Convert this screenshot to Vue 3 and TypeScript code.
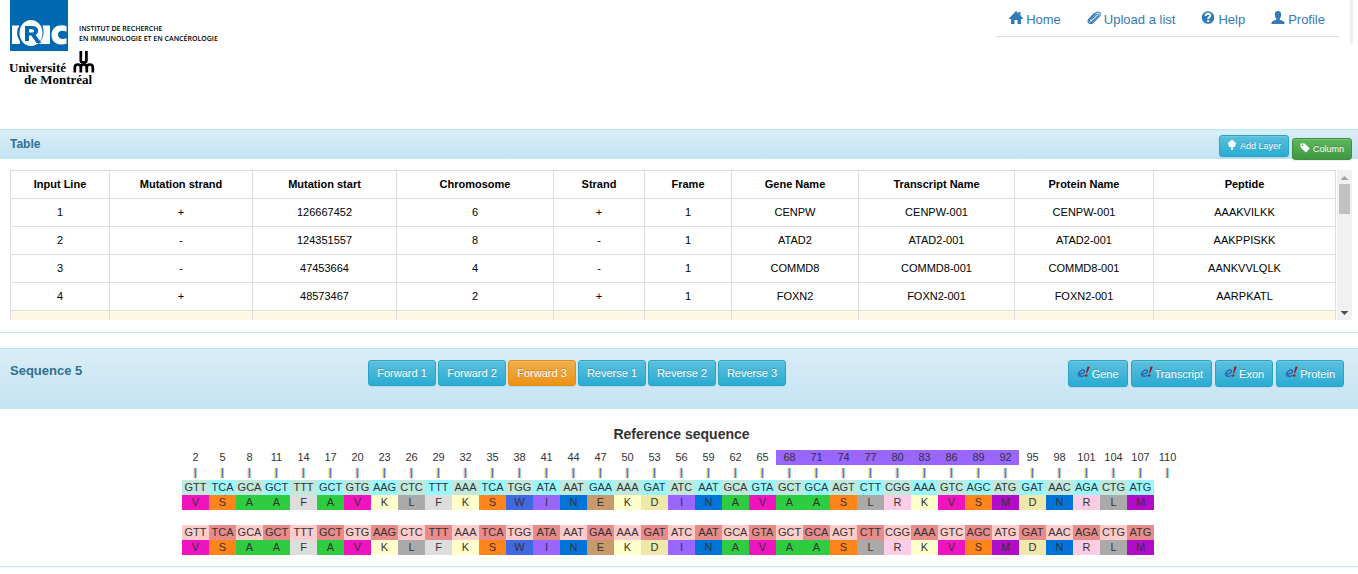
<script setup lang="ts">
interface Column {
  label: string
  weight: number
}

const columns: Column[] = [
  { label: 'Input Line', weight: 99 },
  { label: 'Mutation strand', weight: 143 },
  { label: 'Mutation start', weight: 144 },
  { label: 'Chromosome', weight: 157 },
  { label: 'Strand', weight: 91 },
  { label: 'Frame', weight: 87 },
  { label: 'Gene Name', weight: 127 },
  { label: 'Transcript Name', weight: 156 },
  { label: 'Protein Name', weight: 139 },
  { label: 'Peptide', weight: 182 },
]
const totalWeight = columns.reduce((sum, c) => sum + c.weight, 0)

const rows: string[][] = [
  ['1', '+', '126667452', '6', '+', '1', 'CENPW', 'CENPW-001', 'CENPW-001', 'AAAKVILKK'],
  ['2', '-', '124351557', '8', '-', '1', 'ATAD2', 'ATAD2-001', 'ATAD2-001', 'AAKPPISKK'],
  ['3', '-', '47453664', '4', '-', '1', 'COMMD8', 'COMMD8-001', 'COMMD8-001', 'AANKVVLQLK'],
  ['4', '+', '48573467', '2', '+', '1', 'FOXN2', 'FOXN2-001', 'FOXN2-001', 'AARPKATL'],
]

const frames = ['Forward 1', 'Forward 2', 'Forward 3', 'Reverse 1', 'Reverse 2', 'Reverse 3']
const activeFrame = 'Forward 3'
const links = ['Gene', 'Transcript', 'Exon', 'Protein']

const codons =
  'GTT TCA GCA GCT TTT GCT GTG AAG CTC TTT AAA TCA TGG ATA AAT GAA AAA GAT ATC AAT GCA GTA GCT GCA AGT CTT CGG AAA GTC AGC ATG GAT AAC AGA CTG ATG'.split(' ')
const acids = 'VSAAFAVKLFKSWINEKDINAVAASLRKVSMDNRLM'.split('')
const positions = Array.from({ length: codons.length + 1 }, (_, i) => 2 + 3 * i)
const inPeptide = (p: number) => p >= 68 && p <= 92
</script>

<template>
  <div class="page">
    <header class="top">
      <svg class="logo" width="220" height="90" viewBox="0 0 220 90" role="img" aria-label="IRIC, Université de Montréal">
        <rect x="10" y="0" width="58" height="51" fill="#0068b0" />
        <path d="M12 25.500h7.500q-2.500 3-2.500 7.500t3 8.500v2.500h-8z" fill="#fff" />
        <ellipse cx="31" cy="33" rx="11.500" ry="13" fill="#fff" />
        <path d="M42.500 25.500h7.500v18.500h-10l-1.500-1q4.500-4 5-9t-1-8.500z" fill="#fff" />
        <path d="M66.500 26v5.800c-4-2-8.500-1-8.500 3s4.500 5.200 8.500 3.200v5.700c-7 2.300-15-.3-15-8.800s8-11.300 15-8.900z" fill="#fff" />
        <path fill="#0068b0" fill-rule="evenodd" d="M25 26h7.500c6.500 0 7.500 7 3 9l6 8h-5l-5.200-7.500H29V41h-4zm4 3.200v3.300h3c2.800 0 2.800-3.300 0-3.300z" />
        <g class="institute">
          <text x="79" y="31">INSTITUT DE RECHERCHE</text>
          <text x="79" y="41">EN IMMUNOLOGIE ET EN CANCÉROLOGIE</text>
        </g>
        <g class="university">
          <text x="9" y="72">Université</text>
          <text x="24" y="84">de Montréal</text>
        </g>
        <g fill="none" stroke="#000" stroke-width="2.700">
          <path d="M80.800 51v9.500q0 2 2.800 2t2.800-2V51" />
          <path d="M74.800 72.500V67.500q0-3 3-3t3 3v5M80.800 67.500q0-3 3-3t3 3v5M86.800 67.500q0-3 3-3t3 3v5" />
        </g>
      </svg>
      <nav class="nav">
        <a href="#home"><svg width="14" height="14" viewBox="0 0 14 14"><path fill="currentColor" d="M7 0l2.500 2.500V1h2v3.500L14 7.200v.8h-2v5H8.500V9h-3v4H2V8H0v-.8z" /></svg>Home</a>
        <a href="#upload"><svg width="14" height="14" viewBox="0 0 14 14"><path fill="none" stroke="currentColor" stroke-width="1.100" d="M4.300 8.700l5.200-5.200c1.200-1.100 2.600.2 1.500 1.300L5.300 10.500c-1.900 1.700-4-.3-2.400-2.200L8.600 2.200c2.500-2.600 6.200-.3 4.200 2.700L6.500 11.200c-3.200 3.200-7.200.3-4.800-2.900L7.500 2.200" /></svg>Upload a list</a>
        <a href="#help"><svg width="14" height="14" viewBox="0 0 14 14"><circle cx="7" cy="6.500" r="6.300" fill="currentColor" /><path fill="none" stroke="#fff" stroke-width="1.900" d="M4.700 5c0-3 4.800-2.800 4.600-.2C9.200 6.300 7.200 6 7.200 8" /><path fill="#fff" d="M6.200 9h2v2h-2z" /></svg>Help</a>
        <a href="#profile"><svg width="14" height="14" viewBox="0 0 14 14"><path fill="currentColor" d="M7 0c2.200 0 3.200 1.400 3.200 3.500 0 1.800-.6 3-1.400 3.900v1.400c1.400.8 4.700 1.300 4.700 3.200v1H.5v-1c0-1.900 3.300-2.400 4.700-3.200V7.400C4.400 6.500 3.800 5.300 3.800 3.500 3.800 1.400 4.800 0 7 0z" /></svg>Profile</a>
      </nav>
      <div class="edge"></div>
    </header>

    <section class="panel">
      <div class="panel-heading">
        <h2>Table</h2>
        <div class="tools">
          <button type="button" class="btn btn-xs info"><svg width="10" height="11" viewBox="0 0 10 11"><path fill="currentColor" d="M5 0c1 0 1.700.6 1.900 1.500C8 1.700 9 2.500 9 3.700c0 .9-.3 1.300-.8 1.700 0 1.300-1.200 2-2.500 1.700L6 10H4l.3-2.900C3 7.400 1.800 6.700 1.800 5.400 1.300 5 1 4.600 1 3.700c0-1.200 1-2 2.100-2.200C3.300.6 4 0 5 0z" /></svg>Add Layer</button>
          <button type="button" class="btn btn-xs success"><svg width="10" height="11" viewBox="0 0 10 11"><path fill="currentColor" fill-rule="evenodd" d="M.5.500h4.200L9.700 5.600 6 9.500.5 4.500zm1.300 1.200v1.400h1.400V1.700z" /></svg>Column</button>
        </div>
      </div>
      <div class="table-area">
        <div class="table-clip">
          <table>
            <colgroup>
              <col v-for="c in columns" :key="c.label" :style="{ width: (c.weight / totalWeight) * 100 + '%' }" />
            </colgroup>
            <thead>
              <tr><th v-for="c in columns" :key="c.label" scope="col">{{ c.label }}</th></tr>
            </thead>
            <tbody>
              <tr v-for="row in rows" :key="row[0]"><td v-for="(cell, i) in row" :key="i">{{ cell }}</td></tr>
              <tr class="warning"><td v-for="c in columns" :key="c.label"></td></tr>
            </tbody>
          </table>
        </div>
        <div class="scrollbar" aria-hidden="true">
          <svg width="15" height="14" viewBox="0 0 15 14"><path fill="#a3a3a3" d="M7.500 6L11.500 10h-8z" /></svg>
          <div class="thumb"></div>
          <svg width="15" height="14" viewBox="0 0 15 14"><path fill="#505050" d="M3.500 5h8l-4 4z" /></svg>
        </div>
      </div>
    </section>

    <section class="panel sequence">
      <div class="panel-heading">
        <h2>Sequence 5</h2>
        <div class="frames">
          <button v-for="f in frames" :key="f" type="button" class="btn btn-sm" :class="f === activeFrame ? 'warn' : 'info'">{{ f }}</button>
        </div>
        <div class="links">
          <button v-for="l in links" :key="l" type="button" class="btn btn-sm info"><svg width="13" height="12" viewBox="0 0 13 12"><path fill="none" stroke="#2f62b0" stroke-width="1.400" d="M1.500 7.800C4 8.500 8 6.800 7.500 4.800S2 4.500 1.500 7.800s4.500 3 7 1.200" /><path fill="#a3141c" d="M10.500.5l2.300.3-2.800 6.700-1-.2zM8.700 8.500l2 .3-.7 2-2-.3z" /></svg>{{ l }}</button>
        </div>
      </div>
      <div class="viewer">
        <h3>Reference sequence</h3>
        <div class="grid">
          <span v-for="p in positions" :key="p" :class="{ marked: inPeptide(p) }">{{ p }}</span>
          <span v-for="p in positions" :key="'t' + p" class="tick">|</span>
        </div>
        <div class="grid ref">
          <span v-for="(c, i) in codons" :key="i" class="codon">{{ c }}</span>
          <i></i>
          <span v-for="(a, i) in acids" :key="'a' + i" :class="'aa-' + a">{{ a }}</span>
        </div>
        <div class="grid alt">
          <span v-for="(c, i) in codons" :key="i" class="codon">{{ c }}</span>
          <i></i>
          <span v-for="(a, i) in acids" :key="'a' + i" :class="'aa-' + a">{{ a }}</span>
        </div>
      </div>
    </section>
  </div>
</template>

<style>
body {
  margin: 0;
  background: #fff;
}
</style>

<style scoped>
.page {
  font-family: "Liberation Sans", Arial, sans-serif;
  font-size: 11px;
  color: #333;
  overflow: hidden;
}
.page * {
  box-sizing: border-box;
}
.top {
  display: flex;
  align-items: flex-start;
  height: 129px;
}
.logo {
  flex: none;
  margin-right: auto;
}
.institute {
  font: 600 7px "Open Sans", sans-serif;
}
.university {
  font: bold 13px "Liberation Serif", serif;
}
.nav {
  display: flex;
  gap: 26px;
  height: 37px;
  padding: 11px 14px 0 13px;
  border-bottom: 1px solid #ddd;
}
.nav a {
  display: flex;
  align-items: flex-start;
  gap: 3px;
  font-size: 13px;
  line-height: 17px;
  color: #337ab7;
  text-decoration: none;
}
.edge {
  width: 3px;
  height: 44px;
  margin: 0 5px 0 11px;
  background: #eee;
}
.panel {
  border-bottom: 1px solid #bce8f1;
  margin-bottom: 15px;
}
.panel-heading {
  display: flex;
  align-items: flex-start;
  justify-content: space-between;
  height: 30px;
  padding: 5px 6px 0 10px;
  border-top: 1px solid #bce8f1;
  border-bottom: 1px solid #bce8f1;
  background: linear-gradient(#d9edf7, #c4e3f3);
}
h2 {
  margin: 0;
  padding-top: 1px;
  font-size: 12px;
  line-height: 16px;
  color: #31708f;
}
.tools {
  display: flex;
  gap: 3px;
}
.tools .success {
  margin-top: 3px;
}
.btn {
  display: inline-flex;
  align-items: center;
  justify-content: center;
  font-family: inherit;
  white-space: nowrap;
  color: #fff;
  border: 1px solid;
  border-radius: 3px;
  text-shadow: 0 -1px 0 rgba(0, 0, 0, 0.2);
  box-shadow: inset 0 1px 0 rgba(255, 255, 255, 0.15), 0 1px 1px rgba(0, 0, 0, 0.075);
}
.btn svg {
  flex: none;
}
.btn-xs {
  gap: 3px;
  height: 22px;
  padding: 0 7px;
  font-size: 9px;
}
.btn-xs svg {
  margin-bottom: 2px;
}
.btn-sm {
  height: 26px;
  padding: 0 8px;
  font-size: 11px;
}
.info {
  background: linear-gradient(#5bc0de, #2aabd2);
  border-color: #28a4c9;
}
.success {
  background: linear-gradient(#5cb85c, #419641);
  border-color: #3e8f3e;
}
.warn {
  background: linear-gradient(#f0ad4e, #eb9316);
  border-color: #e38d13;
}
.table-area {
  display: flex;
  gap: 1px;
  height: 173px;
  padding: 11px 6px 12px 10px;
}
.table-clip {
  flex: 1;
  overflow: hidden;
}
table {
  width: 100%;
  table-layout: fixed;
  border-collapse: collapse;
  color: #000;
}
th,
td {
  height: 28px;
  padding: 0 0 2px;
  border: 1px solid #ddd;
  text-align: center;
}
.warning td {
  background: #fcf8e3;
}
.scrollbar {
  display: flex;
  flex-direction: column;
  width: 15px;
  background: #f1f1f1;
}
.thumb {
  height: 30px;
  margin: 0 2px auto;
  background: #c1c1c1;
}
.sequence .panel-heading {
  display: grid;
  grid-template-columns: 358px 1fr auto;
  height: 61px;
  padding-top: 11px;
  padding-right: 14px;
}
.sequence h2 {
  padding-top: 3px;
  font-size: 13px;
}
.frames {
  display: flex;
  gap: 2px;
}
.frames .btn {
  width: 68px;
  padding: 0;
}
.links {
  display: flex;
  gap: 3px;
}
.links .btn {
  gap: 2px;
  height: 27px;
}
.links svg {
  margin-bottom: 4px;
}
.viewer {
  display: flex;
  flex-direction: column;
  align-items: center;
  padding: 17px 0 11px 5px;
}
h3 {
  margin: 0 0 7px;
  font-size: 14px;
  line-height: 17px;
}
.grid {
  display: grid;
  grid-template-columns: repeat(37, 27px);
  grid-auto-rows: 15px;
  line-height: 15px;
  text-align: center;
}
.tick {
  font-weight: bold;
  color: #3b78d8;
  text-shadow: -1px 0 0 #f0b440;
}
.marked {
  background: #9966ff;
}
.ref {
  margin-bottom: 15px;
}
.ref .codon {
  background: #c1e8dd;
}
.ref .codon:nth-child(even) {
  background: #99f8ff;
}
.alt .codon {
  background: #ffcccc;
}
.alt .codon:nth-child(even) {
  background: #e88b8b;
}
.aa-V { background: #f014be; }
.aa-S { background: #ff851b; }
.aa-A { background: #2ecc40; }
.aa-F { background: #dddddd; }
.aa-K { background: #ffffcc; }
.aa-L { background: #aaaaaa; }
.aa-W { background: #4169e1; }
.aa-I { background: #9966ff; }
.aa-N { background: #0074d9; }
.aa-E { background: #c9996b; }
.aa-D { background: #eee8aa; }
.aa-R { background: #ffcce6; }
.aa-M { background: #b10dc9; }
</style>
